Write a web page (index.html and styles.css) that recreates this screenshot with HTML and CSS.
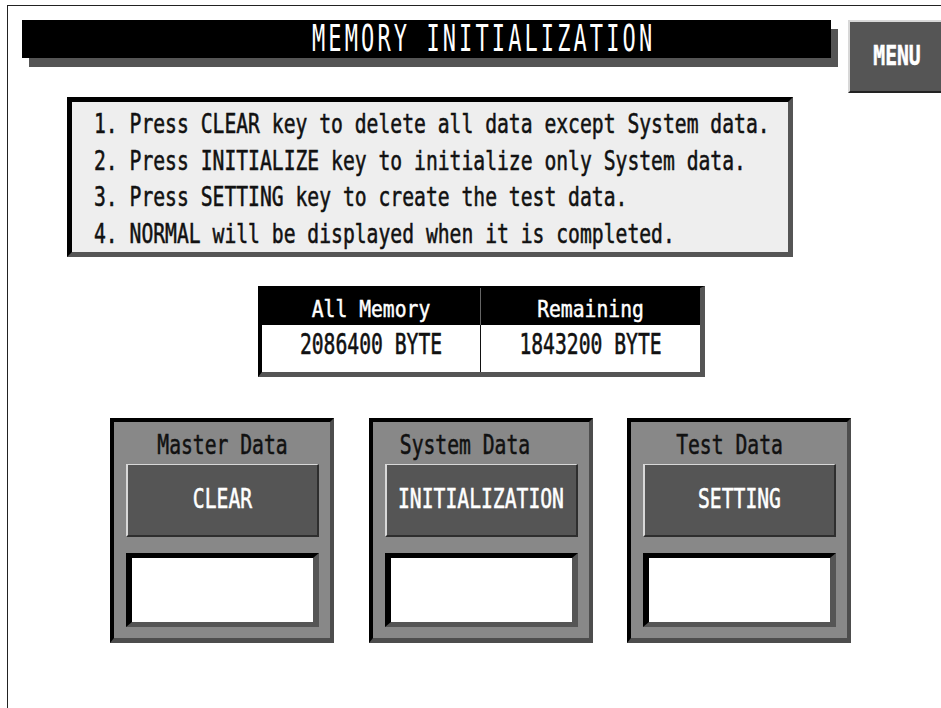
FILE: index.html
```html
<!DOCTYPE html>
<html lang="en">

<head>
  <meta charset="UTF-8">
  <meta name="viewport" content="width=device-width, initial-scale=1.0">
  <title>Memory Initialization</title>
  <link rel="stylesheet" href="styles.css">
</head>

<body>
  <div class="screen">
    <div class="top">
      <div class="title-bar"><span class="title-text">MEMORY INITIALIZATION</span></div>
      <div class="menu-btn"><span class="tall">MENU</span></div>
    </div>

    <div class="notes">
      <p><span class="tall">1. Press CLEAR key to delete all data except System data.</span></p>
      <p><span class="tall">2. Press INITIALIZE key to initialize only System data.</span></p>
      <p><span class="tall">3. Press SETTING key to create the test data.</span></p>
      <p><span class="tall">4. NORMAL will be displayed when it is completed.</span></p>
    </div>

    <div class="memory">
      <div class="mem-row mem-head">
        <div class="cell"><span class="tall short">All Memory</span></div>
        <div class="cell"><span class="tall short">Remaining</span></div>
      </div>
      <div class="mem-row mem-body">
        <div class="cell"><span class="tall big">2086400 BYTE</span></div>
        <div class="cell"><span class="tall big">1843200 BYTE</span></div>
      </div>
    </div>

    <div class="panels">
      <div class="panel">
        <div class="panel-label"><span class="tall">Master Data</span></div>
        <div class="panel-btn"><span class="tall">CLEAR</span></div>
        <div class="panel-out"></div>
      </div>
      <div class="panel">
        <div class="panel-label shift-sys"><span class="tall">System Data</span></div>
        <div class="panel-btn"><span class="tall">INITIALIZATION</span></div>
        <div class="panel-out"></div>
      </div>
      <div class="panel">
        <div class="panel-label shift-test"><span class="tall">Test Data</span></div>
        <div class="panel-btn"><span class="tall">SETTING</span></div>
        <div class="panel-out"></div>
      </div>
    </div>
  </div>
</body>

</html>
```

FILE: styles.css
```css
html,
body {
  margin: 0;
  overflow: hidden;
  background-color: #fff;
}

body {
  font-family: "DejaVu Sans Mono", "Liberation Mono", monospace;
  font-size: 19.7px;
  color: #111;
}

/* the panel font is tall and narrow, so stretch a mono face upward */
.tall {
  display: inline-block;
  white-space: nowrap;
  transform: scaleY(1.36);
  -webkit-text-stroke: 0.4px currentColor;
}

.tall.short {
  transform: scaleY(1.2);
}

.tall.big {
  transform: scaleY(1.45);
}

.screen {
  margin: 5px 0 0 7px;
  height: 703px;
  box-sizing: border-box;
  border-top: 1px solid #222;
  border-left: 1px solid #222;
}

.top {
  display: flex;
  align-items: flex-start;
  gap: 17px;
  padding: 14px 0 0 14px;
}

.title-bar {
  width: 809px;
  height: 38px;
  flex-shrink: 0;
  box-sizing: border-box;
  padding-left: 290px;
  background-color: #000;
  box-shadow: 7px 9px 0 #555;
  line-height: 38px;
}

.title-text {
  display: inline-block;
  font-size: 22px;
  letter-spacing: 3.1px;
  color: #fff;
  white-space: nowrap;
  transform: scaleY(1.68);
}

.menu-btn {
  width: 96px;
  height: 73px;
  flex-shrink: 0;
  box-sizing: border-box;
  display: flex;
  align-items: center;
  justify-content: center;
  background-color: #555;
  border-top: 2px solid #d8d8d8;
  border-left: 2px solid #d8d8d8;
  border-bottom: 2px solid #222;
  color: #fff;
  font-weight: bold;
  line-height: 30px;
}

.notes {
  width: 726px;
  height: 160px;
  box-sizing: border-box;
  margin: 4px 0 0 59px;
  padding: 5px 0 0 22px;
  background-color: #eee;
  border-top: 5px solid #000;
  border-left: 5px solid #000;
  border-right: 5px solid #555;
  border-bottom: 5px solid #555;
}

.notes p {
  margin: 0;
  line-height: 36.6px;
  height: 36.6px;
}

.memory {
  width: 447px;
  box-sizing: border-box;
  margin: 29px 0 0 250px;
  border-top: 2px solid #000;
  border-left: 4px solid #000;
  border-right: 5px solid #555;
  border-bottom: 5px solid #555;
}

.mem-row {
  display: grid;
  grid-template-columns: 1fr 1fr;
}

.cell {
  display: flex;
  justify-content: center;
  align-items: flex-start;
}

.mem-head {
  height: 37px;
  background-color: #000;
  color: #fff;
}

.mem-head .cell {
  padding-top: 6px;
  line-height: 31px;
}

.mem-head .cell:first-child {
  border-right: 1px solid #666;
}

.mem-body {
  height: 47px;
  background-color: #fff;
  color: #111;
}

.mem-body .cell {
  line-height: 39px;
}

.mem-body .cell:first-child {
  border-right: 1px solid #111;
}

.panels {
  display: flex;
  gap: 34.5px;
  margin: 41px 0 0 102px;
}

.panel {
  width: 224px;
  height: 225px;
  box-sizing: border-box;
  padding: 0 11px 0 12px;
  background-color: #888;
  border-top: 4px solid #000;
  border-left: 4px solid #000;
  border-right: 4px solid #4d4d4d;
  border-bottom: 5px solid #4d4d4d;
}

.panel-label {
  height: 42px;
  box-sizing: border-box;
  padding-top: 6px;
  display: flex;
  justify-content: center;
  align-items: flex-start;
  line-height: 36px;
  color: #111;
}

.shift-sys {
  padding-right: 32px;
}

.shift-test {
  padding-right: 20px;
}

.panel-btn {
  height: 73px;
  box-sizing: border-box;
  margin-bottom: 16px;
  display: flex;
  justify-content: center;
  align-items: center;
  background-color: #555;
  border-top: 1px solid #d8d8d8;
  border-left: 2px solid #d8d8d8;
  border-right: 2px solid #2e2e2e;
  border-bottom: 2px solid #2e2e2e;
  color: #fff;
  line-height: 30px;
}

.panel-out {
  height: 74px;
  box-sizing: border-box;
  background-color: #fff;
  border-top: 5px solid #000;
  border-left: 6px solid #000;
  border-right: 6px solid #555;
  border-bottom: 5px solid #555;
}
```
